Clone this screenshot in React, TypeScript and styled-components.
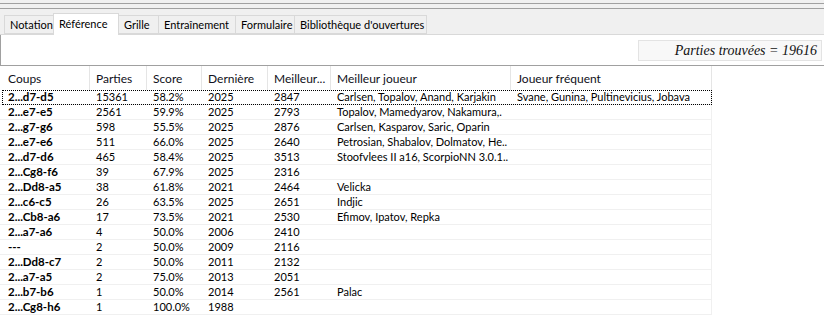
import React from 'react';
import styled, { createGlobalStyle } from 'styled-components';

const GlobalStyle = createGlobalStyle`
  html, body {
    margin: 0;
    padding: 0;
    background: #ffffff;
  }
  body {
    font-family: Lato, "Liberation Sans", Arial, sans-serif;
    font-size: 11px;
    color: #000;
  }
`;

const Window = styled.div`
  width: 824px;
  height: 315px;
  overflow: hidden;
  background: #f0f0f0;
  display: flex;
  flex-direction: column;
`;

const TopBand = styled.div`
  height: 13px;
  padding-top: 3px;
  box-sizing: border-box;
`;

const Rule = styled.div<{ $gap?: number }>`
  height: 0;
  border-top: 1px solid #a0a0a0;
  margin-bottom: ${(p) => p.$gap ?? 0}px;
`;

const TabStrip = styled.div`
  height: 22px;
  display: flex;
  align-items: flex-end;
  padding-left: 4px;
  border-bottom: 1px solid #d9d9d9;
  box-sizing: border-box;
`;

const Tab = styled.div<{ $active?: boolean; $w: number }>`
  width: ${(p) => p.$w}px;
  height: ${(p) => (p.$active ? 22 : 19)}px;
  margin-bottom: ${(p) => (p.$active ? -1 : 0)}px;
  box-sizing: border-box;
  display: flex;
  align-items: center;
  padding-left: 5px;
  background: ${(p) => (p.$active ? '#ffffff' : '#f0f0f0')};
  border: 1px solid #d9d9d9;
  border-bottom: ${(p) => (p.$active ? 'none' : '1px solid #d9d9d9')};
  margin-right: -1px;
  position: relative;
  z-index: ${(p) => (p.$active ? 1 : 0)};
  padding-bottom: ${(p) => (p.$active ? 3 : 0)}px;
  font-size: 11px;
  color: #000;
  white-space: nowrap;
  overflow: hidden;
`;

const Panel = styled.div`
  height: 31px;
  background: #ffffff;
  border-left: 1px solid #a0a0a0;
  border-bottom: 1px solid #a0a0a0;
  box-sizing: border-box;
  display: flex;
  justify-content: flex-end;
  align-items: flex-start;
  padding: 5px 2px 0 0;
`;

const CountBox = styled.div`
  width: 184px;
  height: 21px;
  box-sizing: border-box;
  background: #f8f8f8;
  border: 1px solid #e3e3e3;
  display: flex;
  align-items: center;
  justify-content: flex-end;
  padding-right: 4px;
  font-family: "Liberation Serif", "Times New Roman", serif;
  font-style: italic;
  font-size: 14px;
  color: #111;
`;

const List = styled.div`
  flex: 1;
  background: #ffffff;
`;

const columns = [90, 57, 55, 66, 63, 180, 201];

const Row = styled.div<{ $head?: boolean; $focus?: boolean }>`
  display: grid;
  grid-template-columns: ${columns.map((c) => `${c}px`).join(' ')};
  height: ${(p) => (p.$head ? 24 : 15)}px;
  position: relative;
  &::after {
    content: '';
    display: ${(p) => (p.$focus ? 'block' : 'none')};
    position: absolute;
    left: 2px;
    top: 0;
    width: 710px;
    height: 15px;
    box-sizing: border-box;
    border: 1px dotted #000;
  }
`;

const HeadCell = styled.div`
  padding-left: 6px;
  display: flex;
  align-items: center;
  border-right: 1px solid #e5e5e5;
  color: #101020;
  font-size: 12px;
  white-space: nowrap;
  overflow: hidden;
  &:first-child {
    padding-left: 8px;
  }
`;

const Cell = styled.div<{ $bold?: boolean }>`
  padding-left: 6px;
  line-height: 14px;
  height: 15px;
  box-sizing: border-box;
  border-bottom: 1px solid #f0f0f0;
  font-size: 11px;
  font-weight: ${(p) => (p.$bold ? 700 : 400)};
  white-space: nowrap;
  overflow: hidden;
  &:first-child {
    padding-left: 8px;
    font-size: 11.5px;
  }
  &:last-child {
    border-right: 1px solid #f0f0f0;
  }
`;

const headers = ['Coups', 'Parties', 'Score', 'Dernière', 'Meilleur...', 'Meilleur joueur', 'Joueur fréquent'];

const rows: string[][] = [
  ['2...d7-d5', '15361', '58.2%', '2025', '2847', 'Carlsen, Topalov, Anand, Karjakin', 'Svane, Gunina, Pultinevicius, Jobava'],
  ['2...e7-e5', '2561', '59.9%', '2025', '2793', 'Topalov, Mamedyarov, Nakamura,.', ''],
  ['2...g7-g6', '598', '55.5%', '2025', '2876', 'Carlsen, Kasparov, Saric, Oparin', ''],
  ['2...e7-e6', '511', '66.0%', '2025', '2640', 'Petrosian, Shabalov, Dolmatov, He..', ''],
  ['2...d7-d6', '465', '58.4%', '2025', '3513', 'Stoofvlees II a16, ScorpioNN 3.0.1..', ''],
  ['2...Cg8-f6', '39', '67.9%', '2025', '2316', '', ''],
  ['2...Dd8-a5', '38', '61.8%', '2021', '2464', 'Velicka', ''],
  ['2...c6-c5', '26', '63.5%', '2025', '2651', 'Indjic', ''],
  ['2...Cb8-a6', '17', '73.5%', '2021', '2530', 'Efimov, Ipatov, Repka', ''],
  ['2...a7-a6', '4', '50.0%', '2006', '2410', '', ''],
  ['---', '2', '50.0%', '2009', '2116', '', ''],
  ['2...Dd8-c7', '2', '50.0%', '2011', '2132', '', ''],
  ['2...a7-a5', '2', '75.0%', '2013', '2051', '', ''],
  ['2...b7-b6', '1', '50.0%', '2014', '2561', 'Palac', ''],
  ['2...Cg8-h6', '1', '100.0%', '1988', '', '', ''],
];

const tabs = [
  { label: 'Notation', w: 50 },
  { label: 'Référence', w: 66 },
  { label: 'Grille', w: 41 },
  { label: 'Entraînement', w: 78 },
  { label: 'Formulaire', w: 60 },
  { label: "Bibliothèque d'ouvertures", w: 133 },
];

const App = () => (
  <>
    <GlobalStyle />
    <Window>
      <TopBand>
        <Rule $gap={4} />
        <Rule />
      </TopBand>
      <TabStrip>
        {tabs.map((t) => (
          <Tab key={t.label} $w={t.w} $active={t.label === 'Référence'}>
            {t.label}
          </Tab>
        ))}
      </TabStrip>
      <Panel>
        <CountBox>Parties trouvées = 19616</CountBox>
      </Panel>
      <List>
        <Row $head>
          {headers.map((h) => (
            <HeadCell key={h}>{h}</HeadCell>
          ))}
        </Row>
        {rows.map((r, i) => (
          <Row key={i} $focus={i === 0}>
            {r.map((c, j) => (
              <Cell key={j} $bold={j === 0}>
                {c}
              </Cell>
            ))}
          </Row>
        ))}
      </List>
    </Window>
  </>
);

export default App;
